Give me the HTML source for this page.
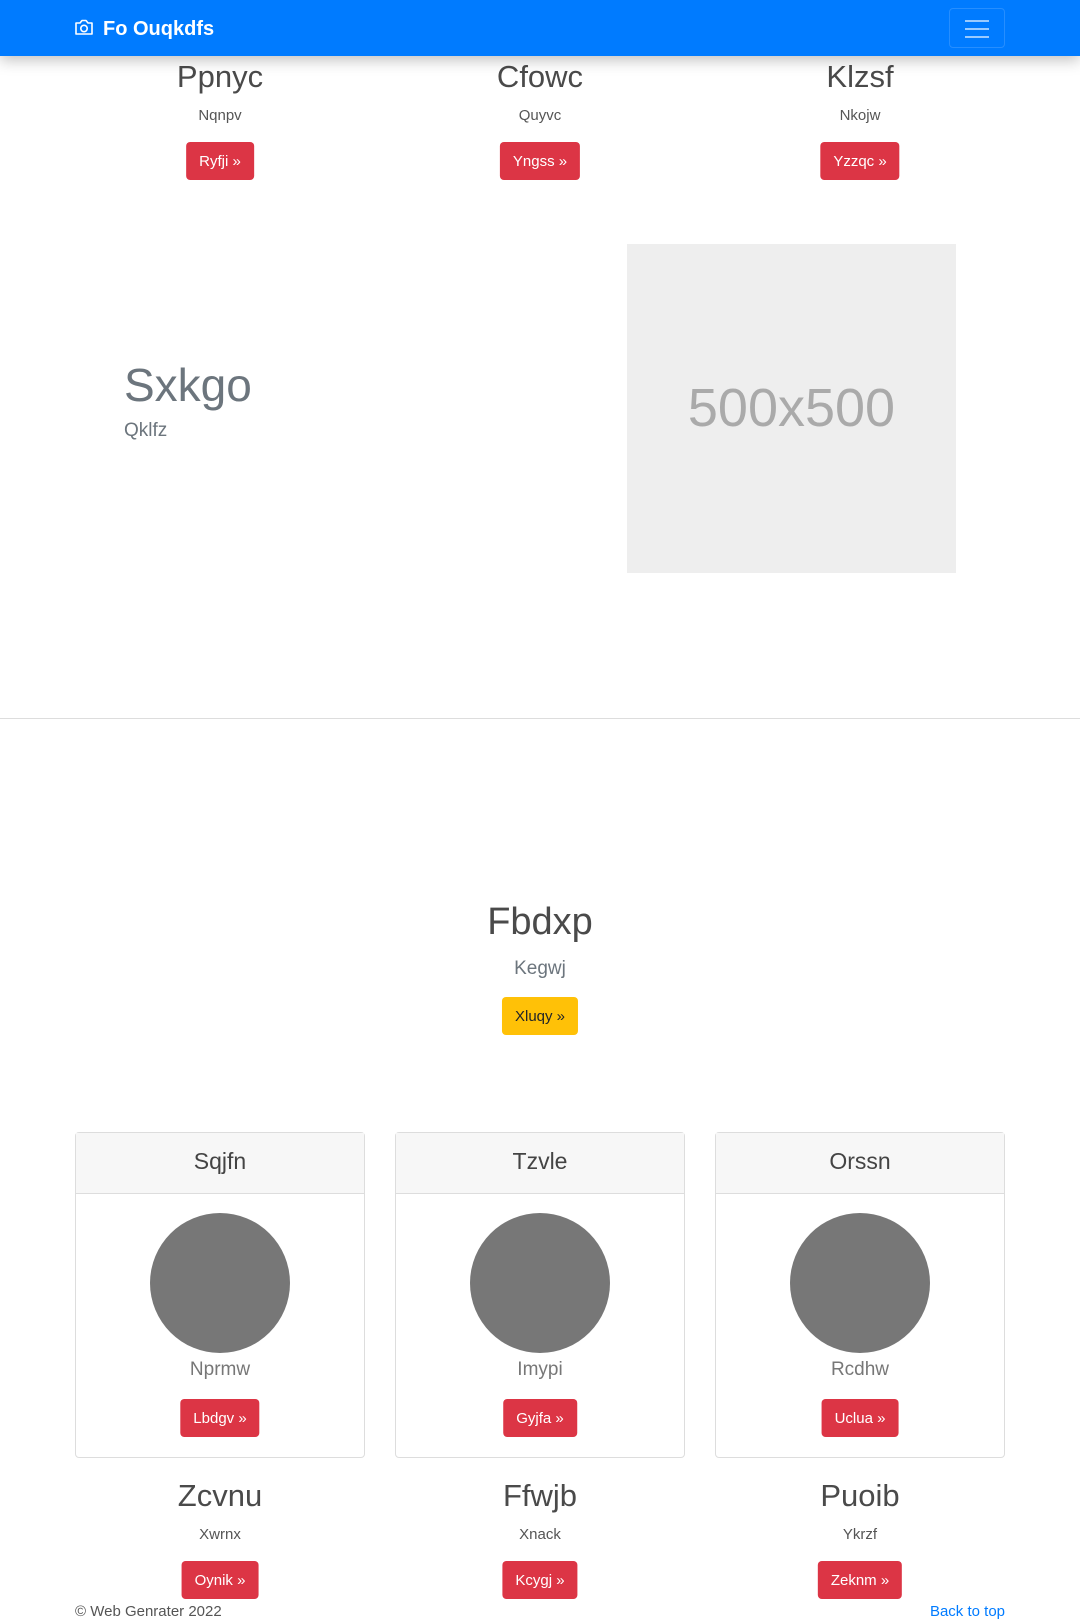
<!DOCTYPE html>
<html><head><meta charset="utf-8"><style>
*{box-sizing:border-box;margin:0;padding:0}
body{width:1080px;height:1623px;position:relative;background:#fff;font-family:"Liberation Sans",sans-serif;color:#212529;overflow:hidden}
.a{position:absolute}
.c{position:absolute;text-align:center;transform:translateX(-50%);white-space:nowrap}
.h{font-size:31px;color:#4a4a4a;font-weight:500}
.s{font-size:15px;color:#555}
.btn{position:absolute;transform:translateX(-50%);height:38px;line-height:40px;padding:0 13px;border-radius:4px;background:#dc3545;color:#fff;font-size:15px;white-space:nowrap}
.card{position:absolute;top:1132px;width:290px;height:326px;border:1px solid #ddd;border-radius:4px}
.card .hd{height:61px;background:#f7f7f7;border-bottom:1px solid #ddd;text-align:center;line-height:56px;font-size:23px;color:#444}
.circ{position:absolute;left:74px;top:80px;width:140px;height:140px;border-radius:50%;background:#777}
.card .t{position:absolute;top:226px;width:100%;text-align:center;font-size:19px;color:#777;font-weight:300}
.card .btn{top:266px;left:50%}
</style></head><body>
<div class="c h" style="left:220px;top:59px">Ppnyc</div>
<div class="c h" style="left:540px;top:59px">Cfowc</div>
<div class="c h" style="left:860px;top:59px">Klzsf</div>
<div class="c s" style="left:220px;top:107px">Nqnpv</div>
<div class="c s" style="left:540px;top:107px">Quyvc</div>
<div class="c s" style="left:860px;top:107px">Nkojw</div>
<div class="btn" style="left:220px;top:142px">Ryfji »</div>
<div class="btn" style="left:540px;top:142px">Yngss »</div>
<div class="btn" style="left:860px;top:142px">Yzzqc »</div>

<div class="a" style="left:124px;top:358px;font-size:46px;color:#6c757d;font-weight:300">Sxkgo</div>
<div class="a" style="left:124px;top:420px;font-size:19px;color:#6c757d;font-weight:300">Qklfz</div>
<div class="a" style="left:627px;top:244px;width:329px;height:329px;background:#eee;color:#aaa;font-size:54px;text-align:center;line-height:329px">500x500</div>

<div class="a" style="left:0;top:718px;width:1080px;height:1px;background:#ddd"></div>

<div class="c" style="left:540px;top:901px;font-size:38px;color:#4a4a4a;font-weight:500">Fbdxp</div>
<div class="c" style="left:540px;top:958px;font-size:19px;color:#6c757d;font-weight:300">Kegwj</div>
<div class="btn" style="left:540px;top:997px;background:#ffc107;color:#212529">Xluqy »</div>

<div class="card" style="left:75px"><div class="hd">Sqjfn</div><div class="circ"></div><div class="t">Nprmw</div><div class="btn">Lbdgv »</div></div>
<div class="card" style="left:395px"><div class="hd">Tzvle</div><div class="circ"></div><div class="t">Imypi</div><div class="btn">Gyjfa »</div></div>
<div class="card" style="left:715px"><div class="hd">Orssn</div><div class="circ"></div><div class="t">Rcdhw</div><div class="btn">Uclua »</div></div>

<div class="c h" style="left:220px;top:1478px">Zcvnu</div>
<div class="c h" style="left:540px;top:1478px">Ffwjb</div>
<div class="c h" style="left:860px;top:1478px">Puoib</div>
<div class="c s" style="left:220px;top:1526px">Xwrnx</div>
<div class="c s" style="left:540px;top:1526px">Xnack</div>
<div class="c s" style="left:860px;top:1526px">Ykrzf</div>
<div class="btn" style="left:220px;top:1561px">Oynik »</div>
<div class="btn" style="left:540px;top:1561px">Kcygj »</div>
<div class="btn" style="left:860px;top:1561px">Zeknm »</div>

<div class="a" style="left:75px;top:1603px;font-size:15px;color:#555">© Web Genrater 2022</div>
<div class="a" style="right:75px;top:1603px;font-size:15px;color:#007bff">Back to top</div>

<div class="a" style="left:0;top:0;width:1080px;height:56px;background:#007bff;box-shadow:0 4px 14px rgba(0,0,0,.25)">
 <svg class="a" style="left:74px;top:19px" width="20" height="17" viewBox="0 0 20 17" fill="none" stroke="#fff" stroke-width="1.6"><path d="M2 4h4l2-2.5h4L14 4h4v11H2z" stroke-linejoin="round"/><circle cx="10" cy="9.5" r="3.2"/></svg>
 <div class="a" style="left:103px;top:18px;font-size:20px;font-weight:bold;color:#fff">Fo Ouqkdfs</div>
 <div class="a" style="left:949px;top:8px;width:56px;height:40px;border:1px solid rgba(255,255,255,.15);border-radius:4px">
  <div class="a" style="left:15px;top:11px;width:24px;height:2px;background:rgba(255,255,255,.6)"></div>
  <div class="a" style="left:15px;top:19px;width:24px;height:2px;background:rgba(255,255,255,.6)"></div>
  <div class="a" style="left:15px;top:27px;width:24px;height:2px;background:rgba(255,255,255,.6)"></div>
 </div>
</div>
</body></html>
